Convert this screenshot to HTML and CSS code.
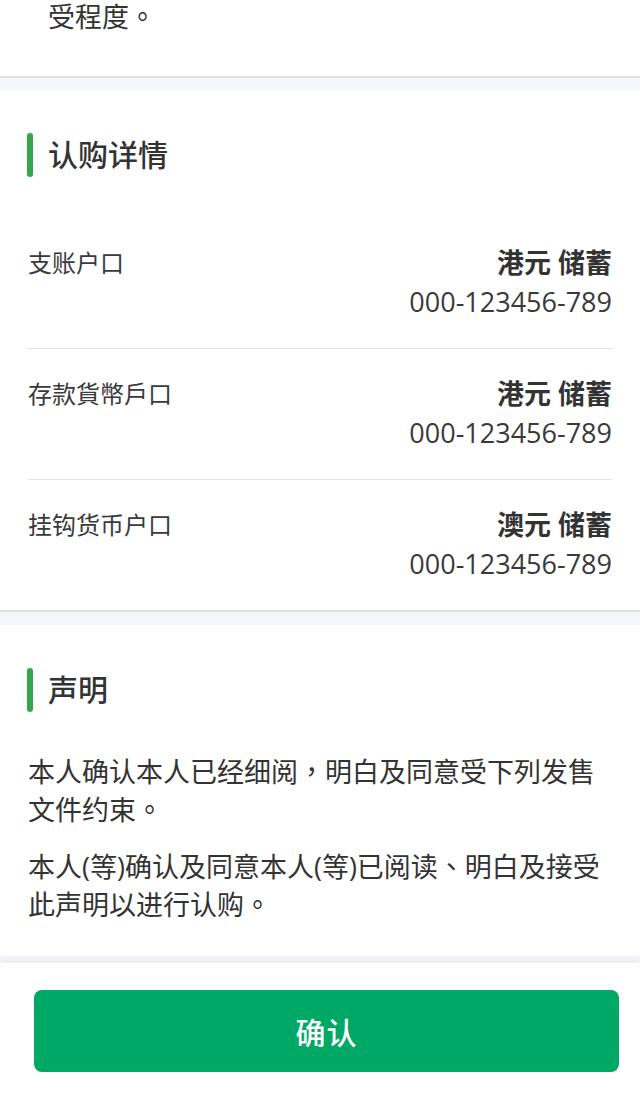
FILE: index.html
```html
<!DOCTYPE html>
<html lang="zh-CN">
<head>
<meta charset="utf-8">
<title>认购详情</title>
<link rel="stylesheet" href="styles.css">
</head>
<body>
<div class="page">
  <section class="card card-top">
    <p class="top-text" lang="zh-TW">受程度。</p>
  </section>

  <section class="card card-details">
    <h2 class="section-title"><span class="bar"></span>认购详情</h2>
    <div class="row">
      <div class="label">支账户口</div>
      <div class="value">
        <div class="value-name">港元 储蓄</div>
        <div class="value-num">000-123456-789</div>
      </div>
    </div>
    <div class="row">
      <div class="label">存款貨幣戶口</div>
      <div class="value">
        <div class="value-name">港元 储蓄</div>
        <div class="value-num">000-123456-789</div>
      </div>
    </div>
    <div class="row">
      <div class="label">挂钩货币户口</div>
      <div class="value">
        <div class="value-name">澳元 储蓄</div>
        <div class="value-num">000-123456-789</div>
      </div>
    </div>
  </section>

  <section class="card card-statement">
    <h2 class="section-title"><span class="bar"></span>声明</h2>
    <p class="para first" lang="zh-TW">本人确认本人已经细阅，明白及同意受下列发售文件约束。</p>
    <p class="para" lang="zh-TW">本人(等)确认及同意本人(等)已阅读、明白及接受此声明以进行认购。</p>
  </section>

  <footer class="footer">
    <button class="confirm" type="button">确认</button>
  </footer>
</div>
</body>
</html>
```

FILE: styles.css
```css
* { box-sizing: border-box; }

html, body {
  margin: 0;
  padding: 0;
}

body {
  background: #f5f6f9;
  font-family: "Open Sans", "Noto Sans CJK SC", sans-serif;
  color: #333;
  width: 640px;
  height: 1100px;
  overflow: hidden;
}

.page {
  display: flex;
  flex-direction: column;
}

.card {
  background: #fff;
}

.card-top {
  padding: 0 28px 42px 48px;
  border-bottom: 2px solid #dedede;
  margin-bottom: 12px;
}

.top-text {
  margin: 0;
  font-size: 27px;
  line-height: 34px;
  color: #333;
}

.card-details {
  padding: 0 28px;
  border-bottom: 2px solid #dedede;
  margin-bottom: 13px;
}

.section-title {
  margin: 0;
  padding-top: 43px;
  display: flex;
  align-items: center;
  font-size: 30px;
  line-height: 44px;
  font-weight: 500;
  color: #333;
  margin-left: -1px;
}

.card-details .section-title {
  padding-bottom: 41px;
}

.bar {
  width: 6px;
  height: 44px;
  border-radius: 3px;
  background: #33a84b;
  margin-right: 15px;
  flex: none;
}

.row {
  display: flex;
  justify-content: space-between;
  align-items: flex-start;
  padding: 27px 0 25px;
}

.row + .row {
  border-top: 1px solid #e3e3e3;
}

.label {
  font-size: 24px;
  line-height: 36px;
  color: #3a3a3a;
}

.value {
  text-align: right;
}

.value-name {
  font-size: 27px;
  line-height: 36px;
  font-weight: 700;
  color: #333;
}

.value-num {
  font-size: 27px;
  line-height: 42px;
  color: #3a3a3a;
}

.card-statement {
  padding: 0 28px 32px;
}

.para {
  margin: 19px 0 0;
  font-size: 27px;
  line-height: 38px;
  color: #333;
}

.para.first {
  margin-top: 41px;
}

.footer {
  margin-top: 7px;
  background: #fff;
  height: 137px;
  padding: 27px 21px 28px 34px;
  box-shadow: 0 -3px 8px rgba(0, 0, 0, 0.05);
}

.confirm {
  display: block;
  width: 100%;
  height: 82px;
  border: none;
  border-radius: 8px;
  background: #00a865;
  color: #fff;
  font-family: "Noto Sans CJK SC", sans-serif;
  font-size: 30px;
  font-weight: 500;
  letter-spacing: 1px;
  cursor: pointer;
}
```
